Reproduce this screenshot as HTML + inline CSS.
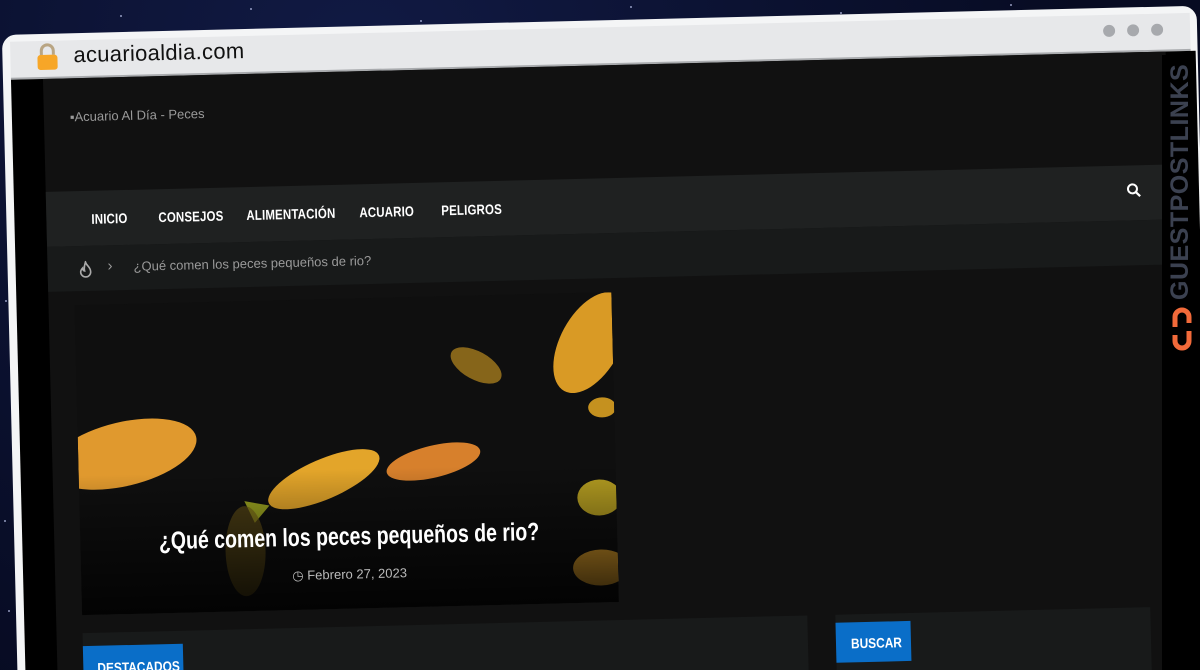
<!DOCTYPE html>
<html><head><meta charset="utf-8"><style>
html,body{margin:0;width:1200px;height:670px;overflow:hidden}
body{background:#0a1030;font-family:"Liberation Sans",sans-serif;position:relative}
.bg{position:absolute;inset:0;background:radial-gradient(circle at 30% 10%,#111a44,#070b22 70%)}
.star{position:absolute;width:2px;height:2px;background:#cfd6ff;border-radius:1px;opacity:.7}
.w{position:absolute;left:0;top:0;width:1200px;height:670px;transform:rotate(-1.4deg);transform-origin:0 40px;overflow:visible}
.frame{position:absolute;left:2px;top:35px;width:1195px;height:665px;background:#f4f5f6;border-radius:14px 14px 0 0}
.addr{position:absolute;left:10px;top:42px;width:1180px;height:36px;background:#e7e8ea;border-bottom:2px solid #a9abae}
.url{position:absolute;left:73px;top:44px;font-size:22px;color:#111;letter-spacing:.3px}
.dot{position:absolute;top:52px;width:12px;height:12px;border-radius:50%;background:#a7a9ad}
.content{position:absolute;left:10px;top:80px;width:1185px;height:620px;background:#000}
.site{position:absolute;left:42px;top:80px;width:1123px;height:620px;background:#111}
.nav{position:absolute;left:42px;top:193px;width:1123px;height:55px;background:#1f2121}
.nav span{position:absolute;top:20px;color:#fff;font-weight:bold;font-size:14px;transform:scaleX(.82);transform-origin:0 0;letter-spacing:.2px}
.bc{position:absolute;left:42px;top:248px;width:1123px;height:45px;background:#181a1a}
.hero{position:absolute;left:68px;top:307px;width:537px;height:310px;background:#0f0f0f;overflow:hidden}
.box{position:absolute;background:#181a1a}
.tab{position:absolute;background:#0a6ec8;color:#fff;font-weight:bold;font-size:14px}
</style></head><body>
<div class="bg"></div>
<div class="star" style="left:120px;top:15px"></div><div class="star" style="left:250px;top:8px"></div><div class="star" style="left:420px;top:20px"></div><div class="star" style="left:630px;top:6px"></div><div class="star" style="left:840px;top:12px"></div><div class="star" style="left:1010px;top:4px"></div><div class="star" style="left:5px;top:300px"></div><div class="star" style="left:4px;top:520px"></div><div class="star" style="left:8px;top:610px"></div>
<div class="w">
<div class="frame"></div>
<div class="addr"></div>
<svg style="position:absolute;left:36px;top:44px" width="22" height="28" viewBox="0 0 22 28"><path d="M5 12V8a6 6 0 0 1 12 0v4" fill="none" stroke="#b9a583" stroke-width="3"/><rect x="1" y="12" width="20" height="15" rx="3" fill="#f7a627"/></svg>
<div class="url">acuarioaldia.com</div>
<div class="dot" style="left:1103px"></div><div class="dot" style="left:1127px"></div><div class="dot" style="left:1151px"></div>
<div class="content"></div>
<div class="site"></div>
<div style="position:absolute;left:68px;top:111px;color:#9a9a9a;font-size:13px">▪Acuario Al Día - Peces</div>
<div class="nav">
<span style="left:45px">INICIO</span><span style="left:112px">CONSEJOS</span><span style="left:200px">ALIMENTACIÓN</span><span style="left:313px">ACUARIO</span><span style="left:395px">PELIGROS</span>
<svg style="position:absolute;left:1080px;top:17px" width="16" height="16" viewBox="0 0 16 16"><circle cx="6.5" cy="6.5" r="4.5" fill="none" stroke="#fff" stroke-width="2"/><path d="M10 10l4 4" stroke="#fff" stroke-width="2.2"/></svg>
</div>
<div class="bc">
<svg style="position:absolute;left:31px;top:15px" width="14" height="18" viewBox="0 0 14 18"><path d="M7 1c1 4 5 5 5 10a5 5 0 0 1-10 0c0-2 1-3 2-4 0 2 1 3 2 3C5 7 6 4 7 1z" fill="none" stroke="#aaa" stroke-width="1.6"/></svg>
<span style="position:absolute;left:60px;top:12px;color:#999;font-size:15px">›</span>
<span style="position:absolute;left:86px;top:14px;color:#9a9a9a;font-size:13px">¿Qué comen los peces pequeños de rio?</span>
</div>
<div class="hero">
<svg width="537" height="310" viewBox="0 0 537 310">
<defs><linearGradient id="g" x1="0" y1="0" x2="0" y2="1"><stop offset=".55" stop-color="#000" stop-opacity="0"/><stop offset="1" stop-color="#000" stop-opacity=".8"/></linearGradient></defs>
<ellipse cx="45" cy="150" rx="75" ry="32" fill="#e0992e" transform="rotate(-12 45 150)"/>
<ellipse cx="245" cy="180" rx="60" ry="20" fill="#e3a52a" transform="rotate(-22 245 180)"/>
<path d="M190 205l-25-5 10 22z" fill="#9aa220"/>
<ellipse cx="355" cy="165" rx="48" ry="16" fill="#d7802c" transform="rotate(-12 355 165)"/>
<ellipse cx="400" cy="70" rx="28" ry="14" fill="#b98a1f" transform="rotate(30 400 70)" opacity=".7"/>
<ellipse cx="515" cy="50" rx="30" ry="55" fill="#d99a25" transform="rotate(30 515 50)"/>
<ellipse cx="525" cy="115" rx="14" ry="10" fill="#c5911f"/>
<ellipse cx="520" cy="205" rx="22" ry="18" fill="#b9a122"/>
<ellipse cx="520" cy="275" rx="28" ry="18" fill="#d69a2a"/>
<ellipse cx="165" cy="250" rx="20" ry="45" fill="#6f5a18" opacity=".6"/>
<rect width="537" height="310" fill="url(#g)"/>
</svg>
<div style="position:absolute;left:0;right:0;top:224px;text-align:center;color:#fff;font-weight:bold;font-size:25px"><span style="display:inline-block;transform:scaleX(.78)">¿Qué comen los peces pequeños de rio?</span></div>
<div style="position:absolute;left:0;right:0;top:268px;text-align:center;color:#bbb;font-size:13px">◷ Febrero 27, 2023</div>
</div>
<div class="box" style="left:68px;top:635px;width:725px;height:65px"></div>
<div class="tab" style="left:68px;top:648px;width:100px;height:52px"><span style="position:absolute;left:14px;top:14px;transform:scaleX(.85);transform-origin:0 0">DESTACADOS</span></div>
<div class="box" style="left:821px;top:635px;width:315px;height:65px"></div>
<div class="tab" style="left:821px;top:643px;width:75px;height:40px"><span style="position:absolute;left:15px;top:13px;transform:scaleX(.85);transform-origin:0 0">BUSCAR</span></div>
</div>
<div style="position:absolute;left:1162px;top:55px;width:33px;height:615px;background:#000"></div>
<div style="position:absolute;left:1166px;top:300px;transform:rotate(-90deg);transform-origin:0 0;color:#3b4150;font-weight:bold;font-size:25px;letter-spacing:.5px">GUESTPOSTLINKS</div>
<svg style="position:absolute;left:1169px;top:305px" width="26" height="48" viewBox="0 0 26 48"><path d="M6 22V12a7 7 0 0 1 14 0v6M20 26v10a7 7 0 0 1-14 0v-6" fill="none" stroke="#f26a3a" stroke-width="5"/></svg>
</body></html>
